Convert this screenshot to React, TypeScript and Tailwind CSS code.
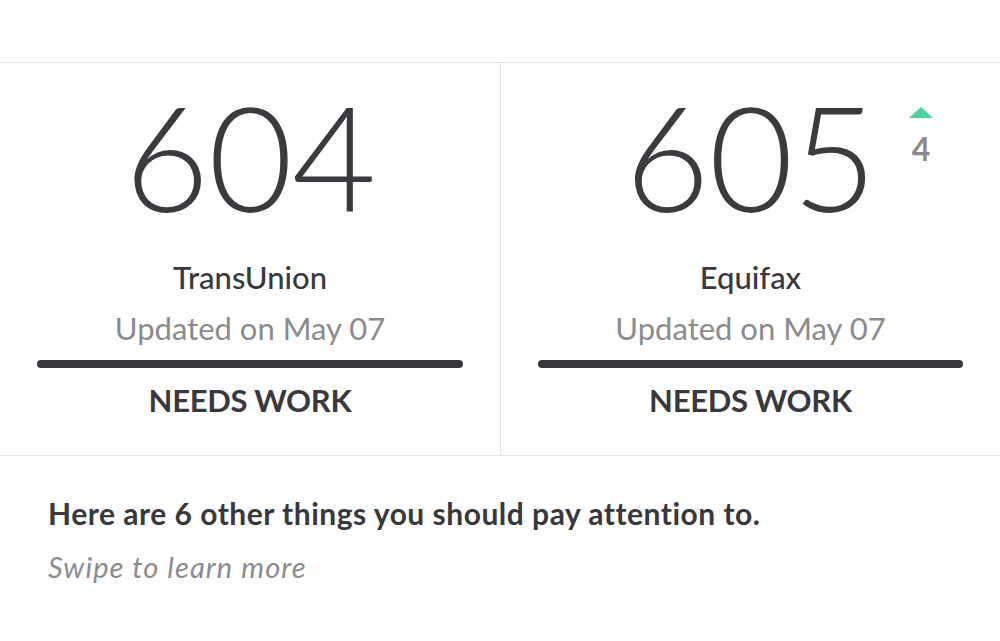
import React from "react";

function ScoreCard({
  score,
  bureau,
  delta,
  withLeftBorder,
}: {
  score: string;
  bureau: string;
  delta?: string;
  withLeftBorder?: boolean;
}) {
  return (
    <div
      className={
        "relative flex flex-col items-center px-[37px] " +
        (withLeftBorder ? "border-l border-[#e6e6e6]" : "")
      }
    >
      <div className="mt-[20px] h-[146px] text-[146px] leading-none font-light text-[#3a3a3f] tracking-[-1px]">
        {score}
      </div>
      <div className="mt-[33px] text-[31px] leading-none font-medium text-[#38383d]">
        {bureau}
      </div>
      <div className="mt-[20px] text-[31px] leading-none text-[#8b8b8e]">
        Updated on May 07
      </div>
      <div className="mt-[16px] w-full h-[8px] rounded-full bg-[#38383c]" />
      <div className="mt-[17px] text-[31px] leading-none font-bold text-[#38383d] tracking-[-0.3px]">
        NEEDS WORK
      </div>
      {delta && (
        <div className="absolute left-[408px] top-[44px] w-[24px] flex flex-col items-center">
          <svg width="24" height="11" viewBox="0 0 24 11">
            <polygon points="12,0 24,11 0,11" fill="#4cd39c" />
          </svg>
          <span className="mt-[15px] text-[32px] leading-none font-bold text-[#8a8a90]">
            {delta}
          </span>
        </div>
      )}
    </div>
  );
}

export default function App() {
  return (
    <div
      className="w-[1000px] h-[641px] bg-white overflow-hidden"
      style={{ fontFamily: "Lato, 'Open Sans', sans-serif" }}
    >
      <div className="h-[62px]" />
      <div className="grid grid-cols-2 h-[394px] border-t border-b border-[#e6e6e6]">
        <ScoreCard score="604" bureau="TransUnion" />
        <ScoreCard score="605" bureau="Equifax" delta="4" withLeftBorder />
      </div>
      <div className="pl-[48px] pt-[42px]">
        <div className="text-[30px] leading-none font-bold text-[#38383d] tracking-[0.5px]">
          Here are 6 other things you should pay attention to.
        </div>
        <div className="mt-[24px] text-[29px] leading-none italic text-[#8b8b8e] tracking-[1.1px]">
          Swipe to learn more
        </div>
      </div>
    </div>
  );
}
